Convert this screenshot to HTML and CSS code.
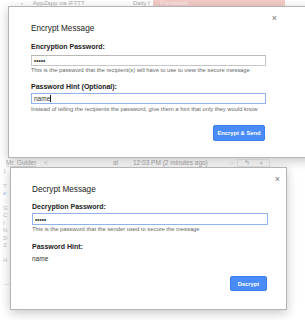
FILE: index.html
```html
<!DOCTYPE html>
<html lang="en">
<head>
  <meta charset="UTF-8">
  <meta name="viewport" content="width=device-width, initial-scale=1.0">
  <title>Encrypt / Decrypt Message</title>
  <link rel="stylesheet" href="styles.css">
</head>
<body>
  <div class="screen">
    <div class="mail-row top-row">
      <span class="row-arrow">›</span>
      <span class="sender">AppZapp via IFTTT</span>
      <span class="subject">Daily f</span>
      <span class="label-pink">Formatted</span>
    </div>

    <div class="dialog encrypt">
      <div class="close-row"><span class="close">×</span></div>
      <h2 class="dialog-title">Encrypt Message</h2>

      <label class="field-label" for="enc-pass">Encryption Password:</label>
      <input class="field-input" type="password" id="enc-pass" value="12345">
      <p class="field-hint">This is the password that the recipient(s) will have to use to view the secure message</p>

      <label class="field-label second" for="enc-hint">Password Hint (Optional):</label>
      <div class="field-input focused"><span>name</span><span class="caret"></span></div>
      <p class="field-hint tight">Instead of telling the recipients the password, give them a hint that only they would know</p>

      <div class="actions">
        <button class="btn-blue">Encrypt &amp; Send</button>
      </div>
    </div>

    <div class="mail-row header-row">
      <span class="from">Mr. Guider</span>
      <span class="faded">&lt;</span>
      <span class="to">al</span>
      <span class="date">12:03 PM (2 minutes ago)</span>
      <span class="star">☆</span>
      <span class="reply-box"><span>↰</span><span class="drop">▾</span></span>
    </div>

    <div class="lower">
      <div class="gutter">
        <span>1</span>
        <span class="gap">T</span>
        <span class="link">e</span>
        <span class="gap">G</span>
        <span>C</span>
        <span>I</span>
        <span>N</span>
        <span>D</span>
        <span>Z</span>
        <span class="gap">H</span>
        <span class="rule"></span>
      </div>

      <div class="dialog decrypt">
        <div class="close-row"><span class="close">×</span></div>
        <h2 class="dialog-title">Decrypt Message</h2>

        <label class="field-label" for="dec-pass">Decryption Password:</label>
        <input class="field-input focused" type="password" id="dec-pass" value="12345">
        <p class="field-hint">This is the password that the sender used to secure the message</p>

        <div class="field-label hint-title">Password Hint:</div>
        <div class="hint-value">name</div>

        <div class="actions">
          <button class="btn-blue small">Decrypt</button>
        </div>
      </div>
    </div>
  </div>
</body>
</html>
```

FILE: styles.css
```css
* {
  margin: 0;
  padding: 0;
  box-sizing: border-box;
  font-family: 'Liberation Sans', Arial, sans-serif;
}

body {
  background-color: #fff;
  overflow: hidden;
}

.screen {
  width: 305px;
  height: 320px;
  overflow: hidden;
  display: flex;
  flex-direction: column;
}

/* linhas do gmail por tras */
.mail-row {
  display: flex;
  align-items: center;
  color: #aaa;
  white-space: nowrap;
  font-size: 6.5px;
}

.top-row {
  height: 6px;
  font-size: 6px;
  line-height: 6px;
  position: relative;
  z-index: 0;
}

.row-arrow {
  width: 33px;
  padding-left: 21px;
}

.sender {
  width: 100px;
}

.subject {
  width: 20px;
}

.label-pink {
  width: 132px;
  height: 6px;
  background-color: #f3cbc7;
  color: #fbeeee;
  padding-left: 7px;
  overflow: hidden;
}

.header-row {
  height: 9px;
  padding-left: 6px;
  color: #a9a9a9;
}

.from {
  width: 38px;
  text-decoration: underline;
  text-decoration-color: #ddd;
}

.faded {
  width: 69px;
  color: #ccc;
}

.to {
  width: 20px;
}

.date {
  width: 95px;
}

.star {
  width: 9px;
  color: #ddd;
}

.reply-box {
  display: flex;
  justify-content: space-between;
  width: 33px;
  height: 8px;
  padding: 0 6px;
  border: 1px solid #eee;
  color: #bbb;
  line-height: 6px;
}

.drop {
  font-size: 5px;
}

.lower {
  display: flex;
  flex: 1;
}

.gutter {
  width: 10px;
  display: flex;
  flex-direction: column;
  padding: 1px 0 0 3px;
  color: #c5c5c5;
  font-size: 6px;
  line-height: 7.5px;
}

.gutter .gap {
  margin-top: 7px;
}

.gutter .link {
  color: #a8bde8;
}

.gutter .rule {
  margin-top: 20px;
  height: 1px;
  background-color: #eee;
}

/* dialogos */
.dialog {
  background-color: #fff;
  border: 1px solid #b4b4b4;
  box-shadow: 0 3px 10px rgba(0, 0, 0, 0.22);
  display: flex;
  flex-direction: column;
  position: relative;
  z-index: 1;
}

.encrypt {
  height: 152px;
  width: 310px;
  margin-left: 8px;
  padding-left: 22px;
  border-right: none;
}

.decrypt {
  width: 277px;
  height: 143px;
  padding: 0 0 0 21px;
}

.close-row {
  height: 10px;
  margin-top: 6px;
  display: flex;
  justify-content: flex-end;
  width: 246px;
}

.decrypt .close-row {
  width: 248px;
}

.close {
  color: #777;
  font-size: 9px;
  line-height: 10px;
}

.dialog-title {
  margin-top: 1px;
  font-size: 8.2px;
  line-height: 10px;
  font-weight: 400;
  color: #222;
}

.field-label {
  display: block;
  margin-top: 8px;
  font-size: 7px;
  line-height: 9px;
  font-weight: 700;
  color: #222;
}

.decrypt .field-label {
  margin-top: 7px;
}

.field-label.second {
  margin-top: 8px;
}

.field-input {
  display: flex;
  align-items: center;
  width: 235px;
  height: 11px;
  margin-top: 4px;
  padding: 0 2px;
  border: 1px solid #c6c6c6;
  border-top-color: #b8b8b8;
  font-size: 6.5px;
  color: #333;
  outline: none;
}

.second + .field-input {
  margin-top: 2px;
}

.field-input.focused {
  border-color: #8fb4ec;
}

.decrypt .field-input {
  width: 236px;
  height: 12px;
  margin-top: 2px;
}

.caret {
  width: 1px;
  height: 7px;
  background-color: #222;
}

.field-hint {
  margin-top: 1px;
  font-size: 5.8px;
  line-height: 7px;
  color: #666;
  white-space: nowrap;
}

.field-hint.tight {
  margin-top: 2px;
}

.decrypt .field-label.hint-title {
  margin-top: 9px;
}

.hint-value {
  margin-top: 3px;
  font-size: 6.5px;
  line-height: 9px;
  color: #333;
}

.actions {
  width: 234px;
  display: flex;
  justify-content: flex-end;
  margin-top: 12px;
}

.decrypt .actions {
  width: 235px;
  margin-top: 13px;
}

.btn-blue {
  width: 52px;
  height: 16px;
  background-color: #4a8cf7;
  border: 1px solid #3a7ce8;
  border-radius: 2px;
  color: #fff;
  font-size: 5.8px;
  font-weight: 700;
  cursor: pointer;
}

.btn-blue.small {
  width: 37px;
  height: 15px;
}
```
